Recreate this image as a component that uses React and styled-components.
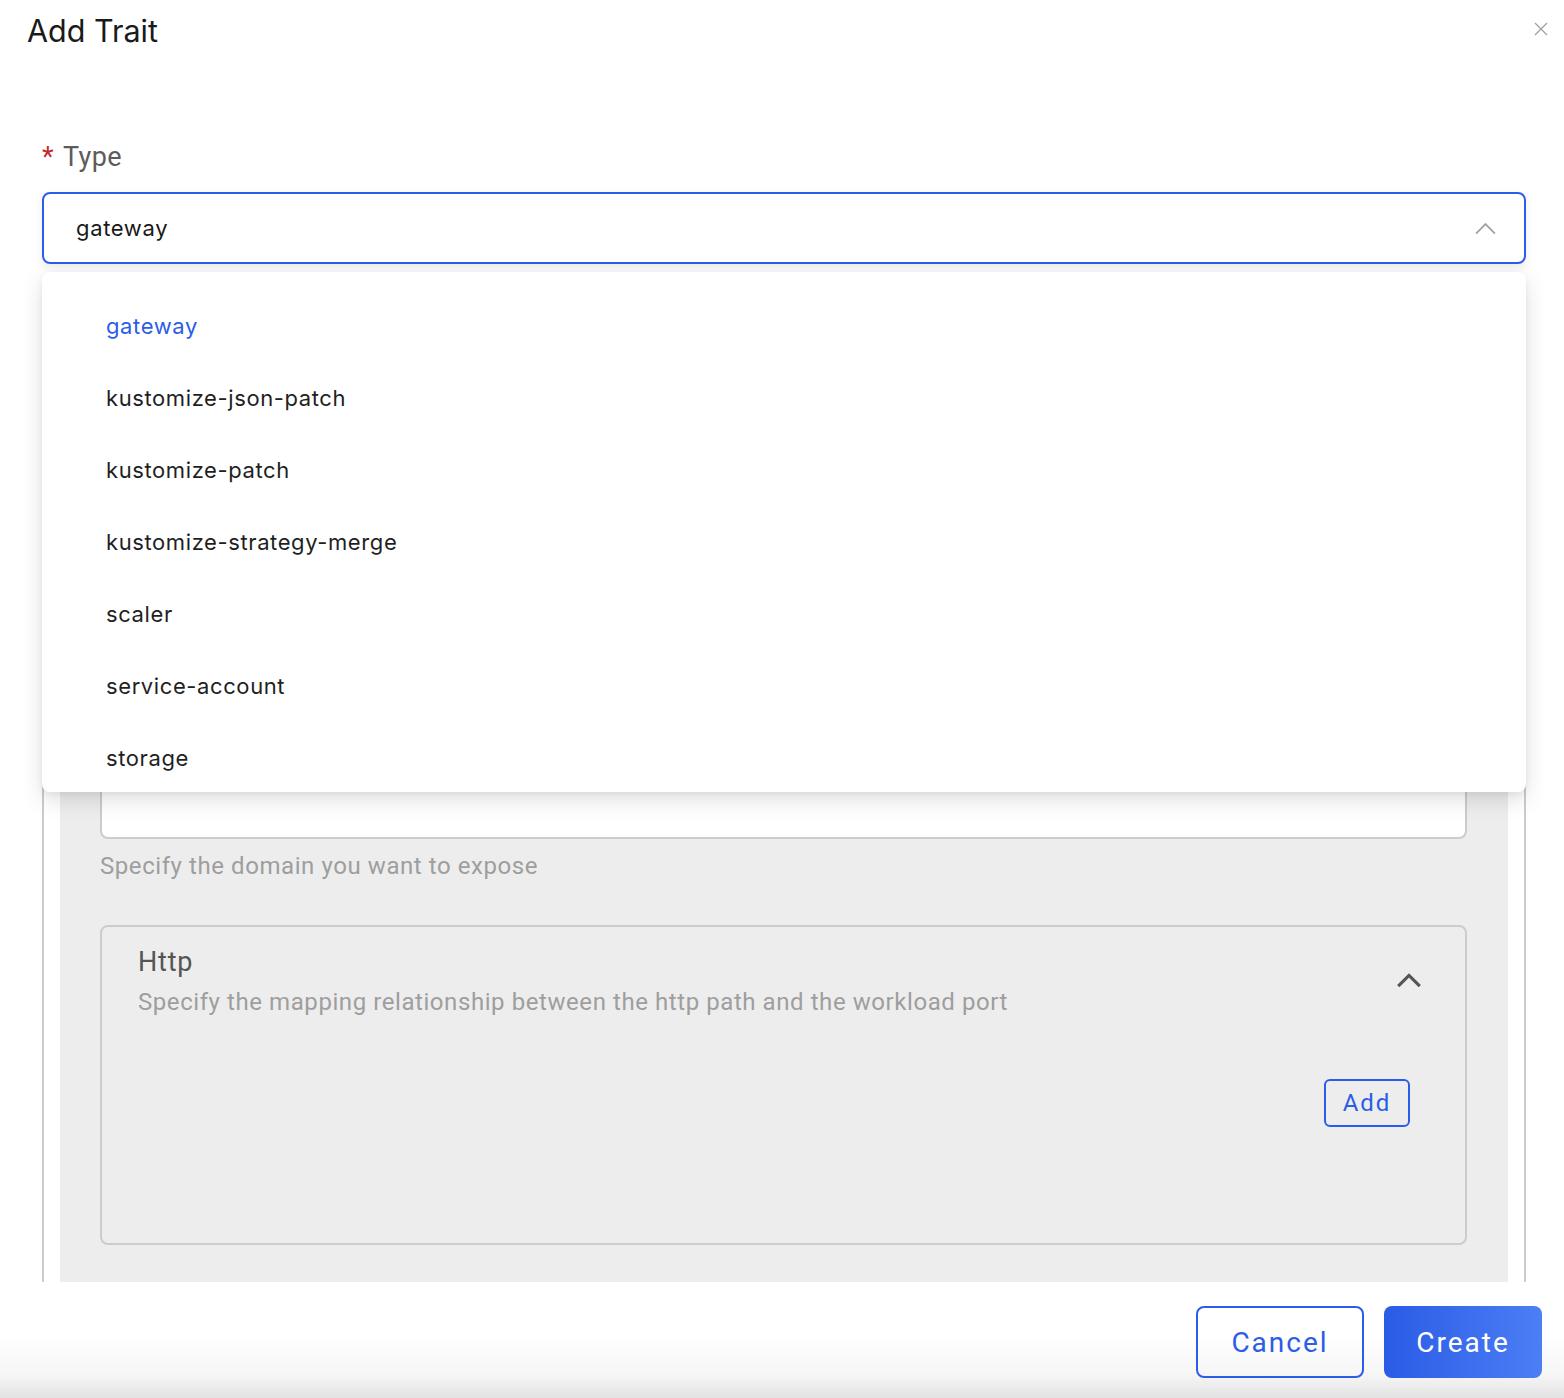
import React from 'react';
import styled, { createGlobalStyle } from 'styled-components';

const GlobalStyle = createGlobalStyle`
    html, body {
        margin: 0;
        padding: 0;
        background: #ffffff;
    }
    * {
        box-sizing: border-box;
    }
`;

const BLUE = '#2b5de8';

const Dialog = styled.div`
    width: 1564px;
    height: 1398px;
    display: flex;
    flex-direction: column;
    background: #ffffff;
    font-family: Roboto, "Liberation Sans", sans-serif;
`;

const Header = styled.div`
    height: 62px;
    display: flex;
    align-items: center;
    justify-content: space-between;
    padding: 0 16px 0 27px;
`;

const Title = styled.h2`
    margin: 0;
    font-family: Inter, "Liberation Sans", sans-serif;
    font-size: 30.5px;
    font-weight: 400;
    color: #1a1a1a;
    line-height: 62px;
`;

const CloseButton = styled.button`
    border: none;
    background: none;
    padding: 0;
    width: 14px;
    height: 14px;
    margin-top: -4px;
    display: flex;
    cursor: pointer;
`;

const Body = styled.div`
    flex: 1;
    overflow: hidden;
    padding: 0 38px 0 42px;
`;

const FieldLabel = styled.label`
    display: block;
    margin-top: 80px;
    font-size: 27px;
    line-height: 30px;
    color: #5c5c5c;
    letter-spacing: 0.4px;
`;

const Required = styled.span`
    color: #c62828;
    margin-right: 9px;
`;

const SelectWrap = styled.div`
    position: relative;
    margin-top: 20px;
`;

const SelectBox = styled.div`
    height: 72px;
    border: 2px solid ${BLUE};
    border-radius: 8px;
    display: flex;
    align-items: center;
    justify-content: space-between;
    padding: 0 28px 0 32px;
    box-shadow: 0 4px 10px rgba(0, 0, 0, 0.08);
    font-family: Inter, "Liberation Sans", sans-serif;
    font-size: 22px;
    letter-spacing: 0.65px;
    color: #1a1a1a;
`;

const Menu = styled.ul`
    position: absolute;
    top: calc(100% + 8px);
    left: 0;
    right: 0;
    margin: 0;
    padding: 18px 0 0;
    list-style: none;
    height: 520px;
    overflow: hidden;
    background: #ffffff;
    border-radius: 8px;
    box-shadow: 0 8px 22px rgba(0, 0, 0, 0.13), 0 2px 6px rgba(0, 0, 0, 0.05);
    z-index: 10;
`;

const MenuItem = styled.li`
    height: 72px;
    flex-shrink: 0;
    display: flex;
    align-items: center;
    padding-left: 64px;
    font-family: Inter, "Liberation Sans", sans-serif;
    font-size: 22px;
    letter-spacing: 0.6px;
    color: ${(p) => (p.$active ? BLUE : '#1f1f1f')};
`;

const Section = styled.div`
    margin-top: 24px;
    border: 2px solid #cccccc;
    border-radius: 8px;
    padding: 16px 16px 0;
`;

// the fields above "Domain" sit under the open menu, so only the space is kept
const SectionInner = styled.div`
    background: #ededed;
    padding: 477px 41px 400px 40px;
`;

const Field = styled.div`
    margin-bottom: 44px;
`;

const TextInput = styled.div`
    height: 56px;
    background: #ffffff;
    border: 2px solid #cccccc;
    border-radius: 8px;
`;

const Helper = styled.div`
    margin-top: 12px;
    font-size: 24px;
    line-height: 30px;
    letter-spacing: 0.57px;
    color: #9e9e9e;
`;

const Card = styled.div`
    border: 2px solid #cccccc;
    border-radius: 8px;
    height: 320px;
    padding: 19px 44px 0 36px;
`;

const CardHead = styled.div`
    display: flex;
    justify-content: space-between;
    align-items: flex-start;
`;

const CardTitle = styled.div`
    font-size: 27px;
    line-height: 32px;
    letter-spacing: 0.8px;
    color: #555555;
`;

const CardDesc = styled.div`
    margin-top: 9px;
    font-size: 24px;
    line-height: 30px;
    letter-spacing: 0.57px;
    color: #9e9e9e;
`;

const Toggle = styled.div`
    margin-top: 27px;
    display: flex;
`;

const CardBody = styled.div`
    display: flex;
    justify-content: flex-end;
    padding-top: 62px;
    padding-right: 11px;
`;

const OutlineButton = styled.button`
    height: ${(p) => (p.$large ? '72px' : '48px')};
    width: ${(p) => (p.$large ? '168px' : '86px')};
    padding: 0;
    border: 2px solid ${BLUE};
    border-radius: ${(p) => (p.$large ? '8px' : '6px')};
    background: transparent;
    color: ${BLUE};
    font-family: Roboto, "Liberation Sans", sans-serif;
    font-size: ${(p) => (p.$large ? '28px' : '24px')};
    letter-spacing: 2px;
    cursor: pointer;
`;

const PrimaryButton = styled.button`
    height: 72px;
    width: 158px;
    border: none;
    border-radius: 8px;
    background: linear-gradient(90deg, #2a5be6 0%, #4c7ef5 100%);
    color: #ffffff;
    font-family: Roboto, "Liberation Sans", sans-serif;
    font-size: 28px;
    letter-spacing: 2px;
    cursor: pointer;
`;

const Footer = styled.div`
    height: 116px;
    display: flex;
    justify-content: flex-end;
    align-items: flex-start;
    gap: 20px;
    padding: 24px 22px 0 0;
    background: linear-gradient(180deg, #ffffff 45%, #f6f6f6 80%, #e2e2e2 100%);
`;

const traitTypes = [
    'gateway',
    'kustomize-json-patch',
    'kustomize-patch',
    'kustomize-strategy-merge',
    'scaler',
    'service-account',
    'storage',
];

const Chevron = ({ color, width = 20, stroke = 2 }) => (
    <svg width={width} height={width * 0.6} viewBox="0 0 20 12" fill="none">
        <path d="M1 11 L10 2 L19 11" stroke={color} strokeWidth={stroke} />
    </svg>
);

const App = () => {
    return (
        <>
            <GlobalStyle />
            <Dialog>
                <Header>
                    <Title>Add Trait</Title>
                    <CloseButton aria-label="close">
                        <svg width="14" height="14" viewBox="0 0 14 14">
                            <path d="M1 1 L13 13 M13 1 L1 13" stroke="#a0a0a0" strokeWidth="1.3" />
                        </svg>
                    </CloseButton>
                </Header>

                <Body>
                    <FieldLabel>
                        <Required>*</Required>Type
                    </FieldLabel>
                    <SelectWrap>
                        <SelectBox>
                            <span>gateway</span>
                            <Chevron color="#a3a3a3" width={21} stroke={1.8} />
                        </SelectBox>
                        <Menu>
                            {traitTypes.map((t) => (
                                <MenuItem key={t} $active={t === 'gateway'}>
                                    {t}
                                </MenuItem>
                            ))}
                        </Menu>
                    </SelectWrap>

                    <Section>
                        <SectionInner>
                            <Field>
                                <TextInput />
                                <Helper>Specify the domain you want to expose</Helper>
                            </Field>

                            <Card>
                                <CardHead>
                                    <div>
                                        <CardTitle>Http</CardTitle>
                                        <CardDesc>
                                            Specify the mapping relationship between the http path and the workload port
                                        </CardDesc>
                                    </div>
                                    <Toggle>
                                        <Chevron color="#555555" width={24} stroke={2.6} />
                                    </Toggle>
                                </CardHead>
                                <CardBody>
                                    <OutlineButton>Add</OutlineButton>
                                </CardBody>
                            </Card>
                        </SectionInner>
                    </Section>
                </Body>

                <Footer>
                    <OutlineButton $large>Cancel</OutlineButton>
                    <PrimaryButton>Create</PrimaryButton>
                </Footer>
            </Dialog>
        </>
    );
};

export default App;
